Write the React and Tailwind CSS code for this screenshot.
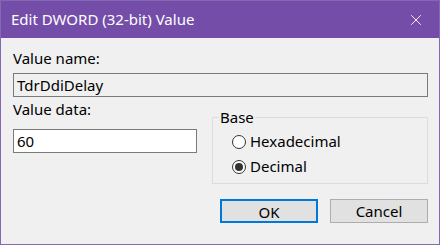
import { X } from 'lucide-react';

function Radio({ checked, label }) {
  return (
    <div className="flex items-center h-[25px]">
      <span className="w-[14px] h-[14px] rounded-full border border-[#333333] bg-white flex items-center justify-center">
        {checked && <span className="w-[8px] h-[8px] rounded-full bg-[#333333]" />}
      </span>
      <span className="ml-[4px]">{label}</span>
    </div>
  );
}

export default function App() {
  return (
    <div
      className="w-[440px] h-[245px] flex flex-col border border-[#8567b4] bg-[#f0f0f0] text-[15px] text-black"
      style={{ fontFamily: '"Noto Sans", sans-serif' }}
    >
      <div className="h-[37px] shrink-0 bg-[#744da9] flex items-center pl-[10px] pr-[14px] text-white">
        <span className="flex-1 leading-none">Edit DWORD (32-bit) Value</span>
        <X size={18} strokeWidth={1.2} className="text-white" />
      </div>

      <div className="flex-1 flex flex-col pl-[12px] pr-[11px]">
        <div className="mt-[10px] h-[20px] leading-[20px]">Value name:</div>
        <div className="mt-[5px] h-[24px] border border-[#7a7a7a] bg-[#f0f0f0] flex items-center px-[3px]">
          TdrDdiDelay
        </div>

        <div className="flex items-start">
          <div className="w-[184px] flex flex-col">
            <div className="mt-[2px] h-[20px] leading-[20px]">Value data:</div>
            <div className="mt-[10px] h-[24px] border border-[#7a7a7a] bg-white flex items-center px-[3px]">
              60
            </div>
          </div>
          <fieldset className="ml-[15px] mt-[10px] flex-1 h-[77px] border border-[#dcdcdc]">
            <legend className="ml-[6px] px-[1px] leading-[20px]">Base</legend>
            <div className="pl-[19px] pt-[2px]">
              <Radio label="Hexadecimal" />
              <Radio checked label="Decimal" />
            </div>
          </fieldset>
        </div>

        <div className="mt-auto mb-[21px] flex justify-end gap-[12px]">
          <button className="w-[98px] h-[24px] border-2 border-[#0078d7] bg-[#e1e1e1]">OK</button>
          <button className="w-[98px] h-[24px] border border-[#adadad] bg-[#e1e1e1]">Cancel</button>
        </div>
      </div>
    </div>
  );
}
